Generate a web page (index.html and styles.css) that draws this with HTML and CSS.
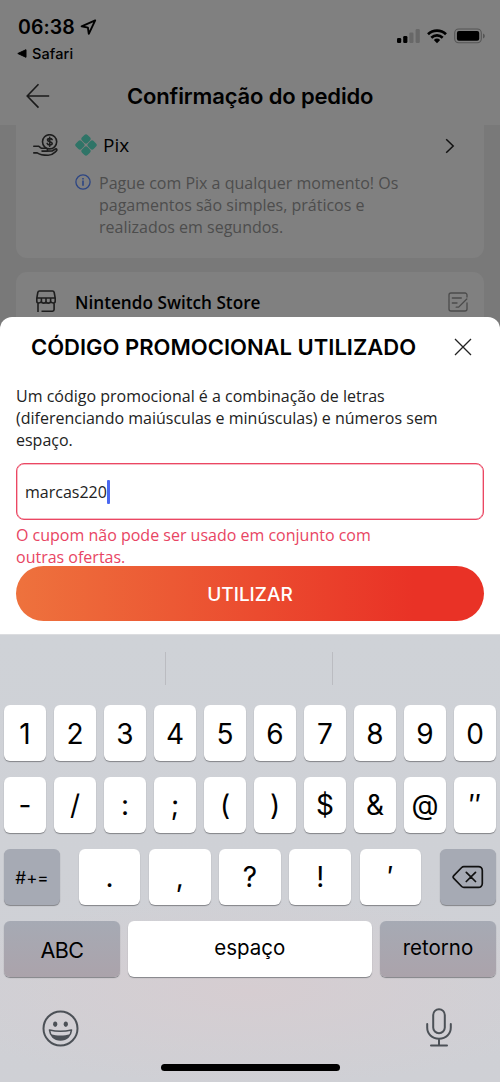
FILE: index.html
```html
<!DOCTYPE html>
<html lang="pt-BR">
<head>
<meta charset="utf-8">
<meta name="viewport" content="width=device-width">
<title>Confirmação do pedido</title>
<link rel="stylesheet" href="styles.css">
</head>
<body>
<div class="screen">
  <div class="order">
    <div class="status">
      <div class="status-left">
        <div class="clock"><span>06:38</span>
          <svg width="17" height="17" viewBox="0 0 17 17" fill="none" stroke="#000" stroke-width="1.9" stroke-linejoin="round"><path d="M15.2 1.4 1.6 7.3l6.3 1.3.9 6.3z"/></svg>
        </div>
        <div class="back-app"><svg width="10" height="9" viewBox="0 0 10 9"><path d="M.8 4.5 9 .7v7.6z" stroke="#000" stroke-linejoin="round"/></svg><span>Safari</span></div>
      </div>
      <div class="status-right">
        <svg width="24" height="16" viewBox="0 0 24 16"><rect x="0" y="10" width="4.2" height="5" rx="1.2"/><rect x="6.2" y="8" width="4.2" height="7" rx="1.2"/><rect x="12.3" y="4.5" width="4.2" height="10.5" rx="1.2" fill="#686868"/><rect x="18.6" y="1" width="4.2" height="14" rx="1.2" fill="#686868"/></svg>
        <svg class="wifi" width="20" height="16" viewBox="0 0 20 16" fill="none" stroke="#000" stroke-width="2.7"><path d="M1 6.2a13.1 13.1 0 0 1 18 0M4.3 9.7a8.3 8.3 0 0 1 11.4 0"/><path d="M10 15.2 6.8 12a4.7 4.7 0 0 1 6.4 0z" fill="#000" stroke="none"/></svg>
        <svg width="32" height="16" viewBox="0 0 32 16"><rect x=".7" y="1" width="26.6" height="13.8" rx="4" fill="none" stroke="#555" stroke-width="1.1"/><rect x="2.9" y="3.1" width="22.3" height="9.7" rx="2"/><path d="M29 5.5c2.4.9 2.4 4 0 5z" fill="#555"/></svg>
      </div>
    </div>
    <div class="nav">
      <svg class="nav-back" width="24" height="26" viewBox="0 0 24 26" fill="none" stroke="#1a1a1a" stroke-width="1.6"><path d="M12.5 1.2 1.2 13l11.3 11.6M1.2 13H23.2"/></svg>
      <h1>Confirmação do pedido</h1>
    </div>
    <div class="cards">
      <section class="card pay">
        <svg class="hand" width="26" height="24" viewBox="0 0 26 24" fill="none" stroke="#1d1d1d" stroke-width="1.6" stroke-linecap="round" stroke-linejoin="round"><circle cx="16.6" cy="7.8" r="7.1"/><path d="M19.1 5.6c-.6-1.3-4.6-1.5-4.6.5 0 2.2 4.7 1.2 4.7 3.4 0 2-4.4 1.8-5-.1M16.7 3.4v8.8"/><path d="M.8 12.3h5.1l2.6 2h4.7c1.8 0 1.9 2.8 0 2.8H9M13.3 17.1l5.8-.1 3.3-2c1.4-.4 2 1 1 1.900-3.200 2.800-4.300 4.400-8.200 4.400-4.700 0-8.300-.4-11-2.400H.8"/></svg>
        <div class="pay-main">
          <div class="pay-name">
            <svg width="22" height="22" viewBox="0 0 22 22" fill="#2f7467"><g transform="rotate(45 11 11)"><rect x="2.8" y="2.8" width="7.8" height="7.8" rx="2.2"/><rect x="11.4" y="2.8" width="7.8" height="7.8" rx="2.2"/><rect x="2.8" y="11.4" width="7.8" height="7.8" rx="2.2"/><rect x="11.4" y="11.4" width="7.8" height="7.8" rx="2.2"/></g></svg>
            <span>Pix</span>
          </div>
          <div class="pay-note">
            <svg width="16" height="16" viewBox="0 0 16 16" fill="none" stroke="#2c4583" stroke-width="1.3"><circle cx="8" cy="8" r="7.1"/><path d="M8 6.6v5.1M8 4.1v1.5" stroke-width="1.6"/></svg>
            <p>Pague com Pix a qualquer momento! Os<br>pagamentos são simples, práticos e<br>realizados em segundos.</p>
          </div>
        </div>
        <svg class="chevron" width="10" height="16" viewBox="0 0 10 16" fill="none" stroke="#111" stroke-width="1.5"><path d="m1.2 1.2 7 6.8-7 6.8"/></svg>
      </section>
      <section class="card store">
        <svg width="22" height="23" viewBox="0 0 22 23" fill="none" stroke="#1d1d1d" stroke-width="1.6" stroke-linejoin="round"><path d="M4.5 1h13c1 0 1.5.6 1.7 1.5l1 5.7v3c0 2.4-4.2 2.4-4.6 0 0 2.6-4.6 2.6-4.6 0 0 2.6-4.6 2.6-4.6 0-.4 2.400-4.600 2.400-4.600 0v-3l1-5.700C3 1.600 3.500 1 4.500 1zM1.800 8h18.400M6.400 8v3.200M11 8v3.200M15.600 8v3.200M3 13v9M6.500 21.200h11c1 0 1.600-.6 1.600-1.600V13"/></svg>
        <h2>Nintendo Switch Store</h2>
        <svg class="note-icon" width="20" height="20" viewBox="0 0 20 20" fill="none" stroke="#4b4b4b" stroke-width="1.3" stroke-linecap="round"><path d="M19 5V3a2 2 0 0 0-2-2H3a2 2 0 0 0-2 2v14a2 2 0 0 0 2 2h14a2 2 0 0 0 2-2v-6M4.300 6h9M4.300 11H9M18.800 7l-8.200 8.200H8.200"/></svg>
      </section>
    </div>
  </div>

  <div class="sheet">
    <div class="sheet-head">
      <h2>CÓDIGO PROMOCIONAL UTILIZADO</h2>
      <svg width="18" height="18" viewBox="0 0 18 18" stroke="#222" stroke-width="1.3"><path d="m1 1 16 16M17 1 1 17"/></svg>
    </div>
    <p class="help">Um código promocional é a combinação de letras<br>(diferenciando maiúsculas e minúsculas) e números sem<br>espaço.</p>
    <div class="field"><span>marcas220</span><i class="caret"></i></div>
    <p class="error">O cupom não pode ser usado em conjunto com<br>outras ofertas.</p>
    <button class="submit"><span>UTILIZAR</span></button>
  </div>

  <div class="keyboard">
    <div class="suggest"><i></i><i></i><i></i></div>
    <div class="keys ten digits"><b>1</b><b>2</b><b>3</b><b>4</b><b>5</b><b>6</b><b>7</b><b>8</b><b>9</b><b>0</b></div>
    <div class="keys ten symbols"><b>-</b><b>/</b><b>:</b><b>;</b><b>(</b><b>)</b><b>$</b><b>&amp;</b><b>@</b><b>″</b></div>
    <div class="keys punct">
      <b class="dark small">#+=</b>
      <div class="mid"><b>.</b><b>,</b><b>?</b><b>!</b><b>′</b></div>
      <b class="dark"><svg width="32" height="24" viewBox="0 0 32 24" fill="none" stroke="#111" stroke-width="1.7" stroke-linecap="round" stroke-linejoin="round"><path d="M11.8 1.6h14.7a3.8 3.8 0 0 1 3.8 3.8v13.2a3.8 3.8 0 0 1-3.8 3.8H11.8a3 3 0 0 1-2.1-.9L1.8 13.4a2 2 0 0 1 0-2.8l7.9-8.1a3 3 0 0 1 2.1-.9zM14.3 7.3l9.2 9.2M23.5 7.3l-9.2 9.2"/></svg></b>
    </div>
    <div class="keys bottom"><b class="dark abc">ABC</b><b class="space">espaço</b><b class="dark return">retorno</b></div>
    <div class="tools">
      <svg class="emoji" width="37" height="37" viewBox="0 0 37 37" fill="none" stroke="#4c5157" stroke-width="2"><circle cx="18.5" cy="18.5" r="17"/><ellipse cx="13.2" cy="14.2" rx="2.1" ry="2.7" fill="#4c5157" stroke="none"/><ellipse cx="23.8" cy="14.2" rx="2.1" ry="2.7" fill="#4c5157" stroke="none"/><path d="M7.5 20c6.5 1.5 15.5 1.5 22 0-.6 6-4.8 10-11 10s-10.4-4-11-10z" stroke-width="1.6" stroke-linejoin="round"/><path d="M9 24.2c5.5 1.7 13.5 1.7 19 0-1.7 3.6-5 5.8-9.5 5.8S10.7 27.8 9 24.2z" fill="#4c5157" stroke="none"/></svg>
      <svg width="26" height="39" viewBox="0 0 26 39" fill="none" stroke="#4c5157" stroke-width="2" stroke-linecap="round"><rect x="7.2" y="1.2" width="11.6" height="24" rx="5.8"/><path d="M1.2 16v3.5c0 6.5 4.8 11.2 11.8 11.2s11.8-4.7 11.8-11.2V16M13 30.7V37.5M5 37.5h16"/></svg>
    </div>
    <div class="home"></div>
  </div>
</div>
</body>
</html>
```
FILE: styles.css
```css
* { box-sizing: border-box; }
body, h1, h2, p { margin: 0; }
body { background: #797979; }
svg { display: block; flex: none; }
span, h1, h2, p { white-space: nowrap; }

.screen {
  width: 500px;
  height: 1082px;
  overflow: hidden;
  display: flex;
  flex-direction: column;
  font-family: "Open Sans", "Noto Sans", sans-serif;
  color: #000;
}

.order { flex: none; height: 331px; background: #797979; overflow: hidden; }
.status {
  height: 68px;
  background: #808080;
  padding: 15px 14px 0 17px;
  display: flex;
  justify-content: space-between;
  font-family: Inter, sans-serif;
}
.clock { display: flex; align-items: center; gap: 5px; height: 24px; padding-left: 1px; font-size: 19.5px; font-weight: 600; letter-spacing: .1px; }
.back-app { display: flex; align-items: center; gap: 5px; margin-top: 4px; height: 20px; font-size: 14.5px; font-weight: 500; letter-spacing: .1px; }
.status-right { display: flex; gap: 6px; padding: 13px 0 0; }
.status-right svg:first-child { margin-right: 1px; margin-left: -2px; }
.wifi { margin-left: -1px; margin-right: 1px; }

.nav { display: flex; align-items: center; height: 57px; padding: 0 26px 2px; background: #808080; }
.nav h1 { margin-left: 77px; font: 600 22px/30px Inter, sans-serif; letter-spacing: -.15px; }

.cards { padding: 0 16px; display: flex; flex-direction: column; gap: 14px; }
.card { background: #808080; border-radius: 11px; }
.pay { height: 133px; border-radius: 0 0 11px 11px; padding: 9px 29px 0 17px; display: flex; }
.pay-main { flex: 1; margin-left: 15px; }
.pay-name { display: flex; align-items: center; gap: 6px; height: 23px; padding-left: 1px; font-size: 19px; }
.pay-name svg { margin-top: -1px; }
.pay-name span { margin-top: -2px; }
.pay-note { display: flex; gap: 8px; margin-top: 15px; padding-left: 1px; color: #4d4d4d; font-size: 16px; line-height: 22px; }
.pay-note svg { margin: 2px 0 0; }
.chevron { margin-top: 4px; }
.store { height: 80px; display: flex; align-items: flex-start; padding: 18px 16px 0 19px; }
.store h2 { margin: 1px 0 0 18px; font-size: 17.2px; line-height: 24px; font-weight: 600; }
.note-icon { margin: 2px 0 0 auto; }

.sheet { flex: none; height: 317px; margin-top: -14px; background: #fff; border-radius: 12px 12px 0 0; padding: 0 16px; }
.sheet-head { display: flex; align-items: center; justify-content: space-between; height: 60px; padding: 0 12px 0 15px; }
.sheet-head h2 { font: 600 22px/30px Inter, sans-serif; }
.help { margin-top: 8px; font-size: 16px; line-height: 22px; color: #222; }
.field { display: flex; align-items: center; height: 57px; margin-top: 12px; padding-left: 8px; border: 1px solid #eb4763; border-radius: 8px; font-size: 16px; color: #222; box-shadow: inset 0 0 0 .5px #f0788c; }
.caret { width: 3px; height: 24px; background: #4a68f0; border-radius: 1px; }
.error { margin-top: 4px; font-size: 16px; line-height: 22px; color: #e84563; }
.submit { display: flex; align-items: center; justify-content: center; width: 468px; height: 55px; margin-top: -2px; padding: 2px 0 0; border: 0; border-radius: 28px; background: linear-gradient(90deg, #ee723d, #e93226 85%); color: #fff; font: 500 19px Inter, sans-serif; }

.keyboard { flex: none; height: 448px; border-top: 1px solid #dcdde0; background: radial-gradient(ellipse 330px 95px at 50% 356px, #d6cdd1, rgba(214, 205, 209, 0)), linear-gradient(#cfd2d7, #cfd0d5); font-family: Inter, sans-serif; padding: 0 4px; }
.suggest { height: 70px; margin: 0 -4px; padding: 17px 0 20px; display: grid; grid-template-columns: 165px 167px 168px; }
.suggest i + i { border-left: 1px solid #bbbcc1; }
.keys { display: flex; height: 56px; margin-bottom: 16px; gap: 8px; }
.keys b { display: flex; align-items: center; justify-content: center; height: 56px; background: #fff; border-radius: 6px; box-shadow: 0 1px 1px #828388; font-size: 28px; font-weight: 380; flex: 1; }
.digits b { padding-top: 2px; }
.keys .dark { background: #a6aab4; }
.punct { justify-content: space-between; }
.punct .dark { flex: none; width: 56px; }
.keys .small { font-size: 17px; font-weight: 400; padding-top: 1px; }
.mid { display: flex; gap: 8.5px; width: 342.5px; }
.bottom .dark { flex: none; width: 116px; background: linear-gradient(#a6aab4, #aba3ab); }
.bottom .space { margin-right: .5px; }
.keys .abc { font-size: 21.5px; letter-spacing: -.5px; padding-top: 2px; }
.keys .space, .keys .return { font-size: 20.5px; font-weight: 400; padding-bottom: 3px; }
.tools { display: flex; justify-content: space-between; height: 71px; padding: 15px 44px 0 38px; }
.emoji { margin-top: 2px; }
.home { width: 179px; height: 7px; margin: 0 auto; border-radius: 4px; background: #000; }
```
